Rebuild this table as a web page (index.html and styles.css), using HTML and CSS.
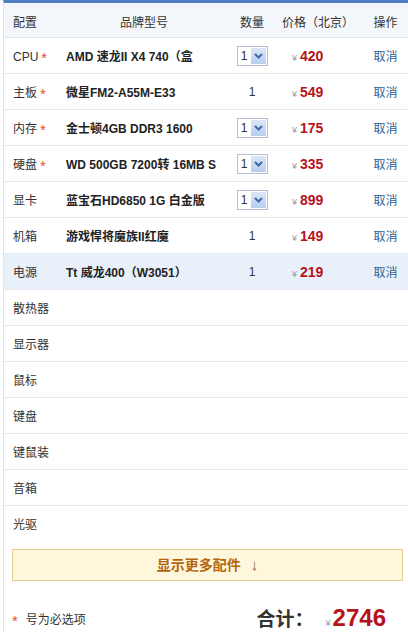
FILE: index.html
```html
<!DOCTYPE html>
<html lang="zh-CN">
<head>
  <meta charset="UTF-8">
  <title>装机配置单</title>
  <link rel="stylesheet" href="styles.css">
</head>
<body>
  <div class="panel">
    <table class="config">
      <colgroup>
        <col class="c-name">
        <col class="c-prod">
        <col class="c-qty">
        <col class="c-price">
        <col class="c-op">
      </colgroup>
      <thead>
        <tr>
          <th class="t-left">配置</th>
          <th>品牌型号</th>
          <th>数量</th>
          <th>价格（北京）</th>
          <th>操作</th>
        </tr>
      </thead>
      <tbody>
        <tr>
          <td class="name">CPU<span class="req">*</span></td>
          <td class="prod">AMD 速龙II X4 740（盒</td>
          <td class="qty"><span class="sel"><span class="val">1</span><span class="arr"><svg width="9" height="6" viewBox="0 0 9 6"><path d="M1 1l3.5 3.5L8 1" fill="none" stroke="#3d66a8" stroke-width="2"/></svg></span></span></td>
          <td class="price"><span class="yen">¥</span>420</td>
          <td class="op">取消</td>
        </tr>
        <tr>
          <td class="name">主板<span class="req">*</span></td>
          <td class="prod">微星FM2-A55M-E33</td>
          <td class="qty">1</td>
          <td class="price"><span class="yen">¥</span>549</td>
          <td class="op">取消</td>
        </tr>
        <tr>
          <td class="name">内存<span class="req">*</span></td>
          <td class="prod">金士顿4GB DDR3 1600</td>
          <td class="qty"><span class="sel"><span class="val">1</span><span class="arr"><svg width="9" height="6" viewBox="0 0 9 6"><path d="M1 1l3.5 3.5L8 1" fill="none" stroke="#3d66a8" stroke-width="2"/></svg></span></span></td>
          <td class="price"><span class="yen">¥</span>175</td>
          <td class="op">取消</td>
        </tr>
        <tr>
          <td class="name">硬盘<span class="req">*</span></td>
          <td class="prod">WD 500GB 7200转 16MB S</td>
          <td class="qty"><span class="sel"><span class="val">1</span><span class="arr"><svg width="9" height="6" viewBox="0 0 9 6"><path d="M1 1l3.5 3.5L8 1" fill="none" stroke="#3d66a8" stroke-width="2"/></svg></span></span></td>
          <td class="price"><span class="yen">¥</span>335</td>
          <td class="op">取消</td>
        </tr>
        <tr>
          <td class="name">显卡</td>
          <td class="prod">蓝宝石HD6850 1G 白金版</td>
          <td class="qty"><span class="sel"><span class="val">1</span><span class="arr"><svg width="9" height="6" viewBox="0 0 9 6"><path d="M1 1l3.5 3.5L8 1" fill="none" stroke="#3d66a8" stroke-width="2"/></svg></span></span></td>
          <td class="price"><span class="yen">¥</span>899</td>
          <td class="op">取消</td>
        </tr>
        <tr>
          <td class="name">机箱</td>
          <td class="prod">游戏悍将魔族II红魔</td>
          <td class="qty">1</td>
          <td class="price"><span class="yen">¥</span>149</td>
          <td class="op">取消</td>
        </tr>
        <tr class="active">
          <td class="name">电源</td>
          <td class="prod">Tt 威龙400（W3051）</td>
          <td class="qty">1</td>
          <td class="price"><span class="yen">¥</span>219</td>
          <td class="op">取消</td>
        </tr>
        <tr><td class="name">散热器</td><td></td><td></td><td></td><td></td></tr>
        <tr><td class="name">显示器</td><td></td><td></td><td></td><td></td></tr>
        <tr><td class="name">鼠标</td><td></td><td></td><td></td><td></td></tr>
        <tr><td class="name">键盘</td><td></td><td></td><td></td><td></td></tr>
        <tr><td class="name">键鼠装</td><td></td><td></td><td></td><td></td></tr>
        <tr><td class="name">音箱</td><td></td><td></td><td></td><td></td></tr>
        <tr class="last"><td class="name">光驱</td><td></td><td></td><td></td><td></td></tr>
      </tbody>
    </table>

    <div class="more">显示更多配件 <span class="down">↓</span></div>

    <div class="footer">
      <div class="note"><span class="req">*</span>号为必选项</div>
      <div class="total">合计：<span class="yen">¥</span><span class="sum">2746</span></div>
    </div>
  </div>
</body>
</html>
```

FILE: styles.css
```css
/* Global */
body {
  margin: 0;
  padding: 0;
  background: #fff;
  font-family: "Liberation Sans", Arial, "Noto Sans CJK SC", sans-serif;
  font-size: 12px;
  color: #333;
}

.panel {
  border-top: 3px solid #4f7fc1;
  border-left: 1px solid #dde3ea;
  margin-left: 3px;
  height: 629px;
}

/* Table */
.config {
  width: 100%;
  border-collapse: collapse;
  table-layout: fixed;
}

.c-name { width: 54px; }
.c-prod { width: 172px; }
.c-qty { width: 44px; }
.c-price { width: 88px; }
.c-op { width: 47px; }

.config th {
  height: 31px;
  background: #f3f7fb;
  font-weight: normal;
  color: #333;
  border-bottom: 1px solid #e3e8ee;
  padding: 3px 0 0;
  text-align: center;
}

.config th.t-left {
  text-align: left;
  padding-left: 9px;
}

.config td {
  height: 35px;
  padding: 0;
  border-bottom: 1px solid #e6e9ed;
}

.config tr.last td {
  border-bottom: none;
}

.config tr.active td {
  background: #e8f0f9;
}

td.name {
  padding-left: 9px !important;
  color: #333;
}

.req {
  color: #e0502a;
  font-size: 15px;
  margin-left: 3px;
  position: relative;
  top: 2px;
}

td.prod {
  padding-left: 8px !important;
  font-weight: bold;
  white-space: nowrap;
  overflow: hidden;
  color: #222;
}

td.qty {
  text-align: center;
}

.sel {
  display: inline-flex;
  align-items: center;
  height: 18px;
  border: 1px solid #b4c1d2;
  background: #fff;
  vertical-align: middle;
}

.sel .val {
  width: 13px;
  text-align: center;
}

.sel .arr {
  width: 15px;
  height: 16px;
  margin: 1px 1px 1px 0;
  background: linear-gradient(#dbe7f8, #b8cdee);
  display: flex;
  align-items: center;
  justify-content: center;
}

td.price {
  padding-left: 18px !important;
  color: #b5121b;
  font-weight: bold;
  font-size: 14px;
}

.yen {
  color: #999;
  font-size: 9px;
  font-weight: normal;
  margin-right: 3px;
}

td.op {
  text-align: center;
  color: #2e6390;
}

/* More button */
.more {
  margin: 8px 5px 0 8px;
  height: 30px;
  line-height: 30px;
  border: 1px solid #e2cc90;
  background: #fff7dc;
  text-align: center;
  color: #b4650c;
  font-weight: bold;
  font-size: 14px;
}

.more .down {
  margin-left: 6px;
  color: #8a5a1c;
  font-size: 15px;
}

/* Footer */
.footer {
  display: flex;
  justify-content: space-between;
  align-items: center;
  margin-top: 23px;
  padding: 0 22px 0 8px;
}

.note .req {
  margin: 0 8px 0 0;
}

.total {
  font-family: "Noto Sans CJK SC", serif;
  font-weight: bold;
  font-size: 19px;
  color: #333;
  display: flex;
  align-items: baseline;
}

.total .yen {
  font-family: "Liberation Sans", sans-serif;
  margin: 0 2px 0 12px;
}

.sum {
  font-family: "Liberation Sans", Arial, sans-serif;
  font-weight: bold;
  color: #b5121b;
  font-size: 24px;
}
```
